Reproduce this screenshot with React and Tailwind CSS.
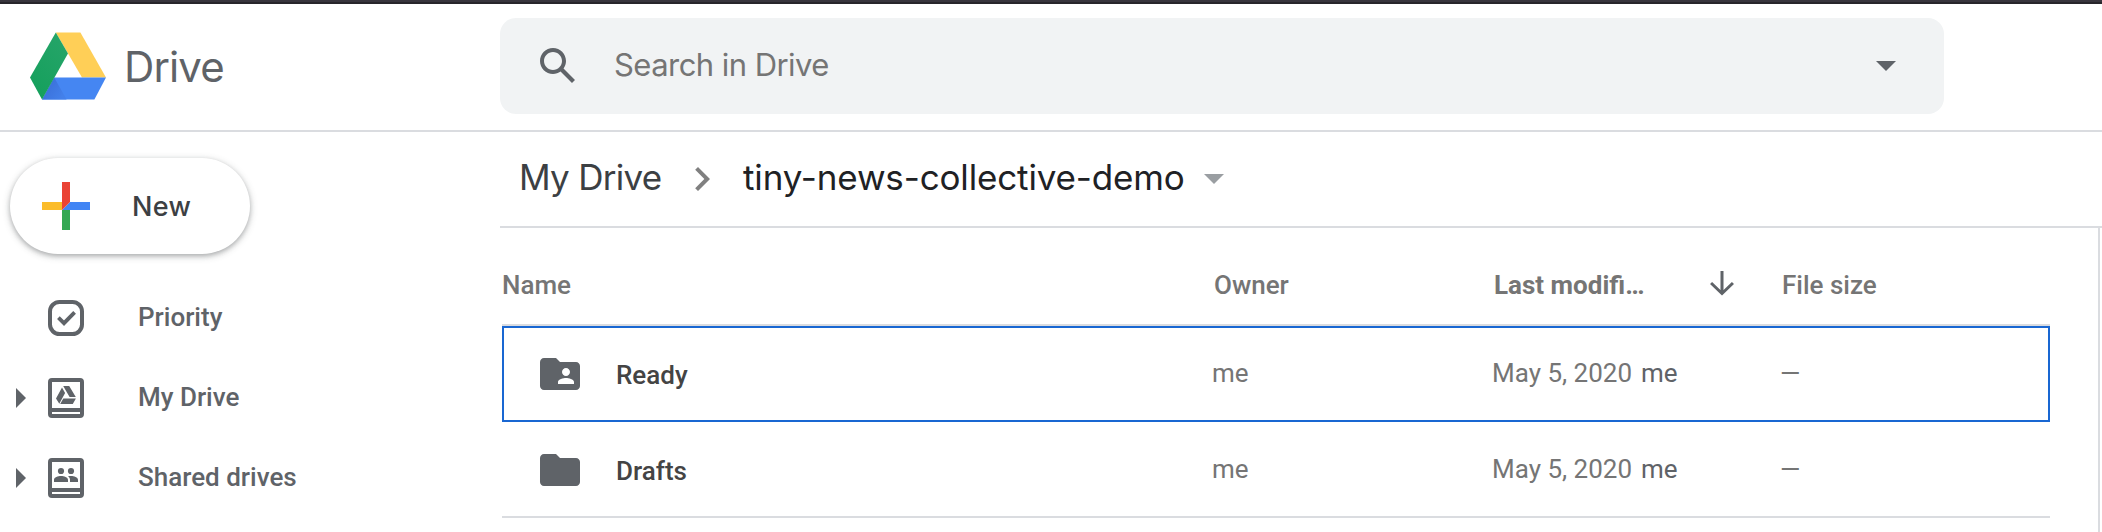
function DriveLogo() {
  return (
    <svg width="76" height="68" viewBox="30 32 76 68" className="shrink-0">
      <defs>
        <linearGradient id="fold" x1="0" y1="0" x2="1" y2="0.6">
          <stop offset="0.2" stopColor="#3a6fd8" />
          <stop offset="1" stopColor="#4380ea" />
        </linearGradient>
        <linearGradient id="leaf" x1="1" y1="0" x2="0.4" y2="1">
          <stop offset="0" stopColor="#27a56a" />
          <stop offset="1" stopColor="#16a05d" />
        </linearGradient>
      </defs>
      <polygon points="55.8,32.6 80.4,32.6 106,77.6 82,77.6" fill="#ffcf57" />
      <polygon points="54.2,77.6 106,77.6 94.4,99.4 42,99.4" fill="#4586f2" />
      <polygon points="54.2,77.6 66.6,99.4 42,99.4" fill="url(#fold)" />
      <polygon points="55.8,32.6 68,53.6 42,99.4 30,77.6" fill="url(#leaf)" />
    </svg>
  );
}

function PlusIcon() {
  return (
    <svg width="48" height="48" viewBox="0 0 48 48" className="shrink-0">
      <polygon points="0,20 20,20 20,28 0,28" fill="#fbbc2a" />
      <polygon points="20,28 28,28 28,48 20,48" fill="#34a853" />
      <polygon points="28,20 48,20 48,28 20,28" fill="#4285f4" />
      <polygon points="20,0 28,0 28,20 20,28" fill="#ea4335" />
    </svg>
  );
}

function PriorityIcon() {
  return (
    <svg width="36" height="36" viewBox="0 0 36 36" fill="none" stroke="#5f6368">
      <rect x="2" y="2" width="32" height="32" rx="9.5" strokeWidth="4" />
      <path d="M10.4 17.7 16 23.2 26.6 12.4" strokeWidth="3.8" />
    </svg>
  );
}

function DriveFrame({ children }) {
  return (
    <svg width="36" height="40" viewBox="0 0 36 40" fill="#5f6368">
      <path
        fillRule="evenodd"
        d="M4 0H32A4 4 0 0 1 36 4V36A4 4 0 0 1 32 40H4A4 4 0 0 1 0 36V4A4 4 0 0 1 4 0ZM4 4V30H32V4ZM4 34V36H32V34Z"
      />
      {children}
    </svg>
  );
}

function MyDriveIcon() {
  return (
    <DriveFrame>
      <path d="M15.2 8H21.2L27.8 19H21.6ZM14 9.6 17.1 15 11.3 25.8 8 20.6ZM15.3 20.4H27.9L24.8 26H12.2Z" />
    </DriveFrame>
  );
}

function SharedIcon() {
  return (
    <DriveFrame>
      <circle cx="13" cy="13" r="3.1" />
      <circle cx="23" cy="13" r="3.1" />
      <path d="M6 24V21.8C6 19.2 10 18 13 18S20 19.2 20 21.8V24ZM22 24V21.8C22 20.3 21.2 19 20 18.2 21 18 22 18 23 18 26 18 30 19.2 30 21.8V24Z" />
    </DriveFrame>
  );
}

function FolderIcon({ shared }) {
  return (
    <svg width="48" height="48" viewBox="0 0 24 24" fill="#5f6368" className="shrink-0">
      {shared ? (
        <path d="M20 6h-8l-2-2H4c-1.1 0-1.99.9-1.99 2L2 18c0 1.1.9 2 2 2h16c1.1 0 2-.9 2-2V8c0-1.1-.9-2-2-2zm-5 3c1.1 0 2 .9 2 2s-.9 2-2 2-2-.9-2-2 .9-2 2-2zm4 8h-8v-1c0-1.33 2.67-2 4-2s4 .67 4 2v1z" />
      ) : (
        <path d="M10 4H4c-1.1 0-1.99.9-1.99 2L2 18c0 1.1.9 2 2 2h16c1.1 0 2-.9 2-2V8c0-1.1-.9-2-2-2h-8l-2-2z" />
      )}
    </svg>
  );
}

function NavItem({ icon, label, expandable }) {
  return (
    <div className="flex h-20 items-center pl-4">
      <svg width="10" height="20" viewBox="0 0 10 20" fill="#5f6368" className="shrink-0">
        {expandable && <polygon points="0,0 10,10 0,20" />}
      </svg>
      <div className="ml-[22px] w-9">{icon}</div>
      <span className="ml-[54px] pb-0.5 text-[26px] leading-9 font-medium text-[#5f6368]">{label}</span>
    </div>
  );
}

const ROW =
  "grid h-24 grid-cols-[675px_280px_289px_1fr] items-center text-[26px] leading-9 text-[#757575]";

function FileRow({ name, shared, selected }) {
  return (
    <div
      className={
        selected
          ? ROW + " border-2 border-[#1967d2] pl-8"
          : ROW + " border-b-2 border-[#dadce0] pt-0.5 pl-[34px]"
      }
    >
      <div className="flex items-center">
        <FolderIcon shared={shared} />
        <span className="ml-8 pt-0.5 font-medium text-[#444]">{name}</span>
      </div>
      <span className="pb-0.5 pl-px">me</span>
      <span className="flex gap-[9px] pb-0.5 pl-px">
        <span>May 5, 2020</span>
        <span className="text-[#5f6368]">me</span>
      </span>
      <span className="pb-0.5">—</span>
    </div>
  );
}

export default function App() {
  return (
    <div className="flex h-[532px] w-full flex-col overflow-hidden bg-white font-['Roboto',sans-serif]">
      <header className="flex h-[132px] shrink-0 items-center border-b-2 border-[#dadce0] bg-[linear-gradient(#38353d_0_2px,#28262b_2px_4px,#fff_4px)] pt-0.5">
        <div className="flex w-[500px] shrink-0 items-center pl-[30px]">
          <DriveLogo />
          <span className="ml-[18px] pt-0.5 font-['Inter',sans-serif] text-[42px] leading-none tracking-[-0.9px] text-[#5f6368]">
            Drive
          </span>
        </div>
        <div className="flex h-24 w-[1444px] items-center rounded-2xl bg-[#f1f3f4] pr-12 pl-[34px]">
          <svg width="48" height="48" viewBox="0 0 24 24" fill="#5f6368" className="shrink-0">
            <path d="M20.49 19l-5.73-5.73C15.53 12.2 16 10.91 16 9.5 16 5.91 13.09 3 9.5 3S3 5.91 3 9.5 5.91 16 9.5 16c1.41 0 2.7-.47 3.77-1.24L19 20.49 20.49 19zM5 9.5C5 7.01 7.01 5 9.5 5S14 7.01 14 9.5 11.99 14 9.5 14 5 11.99 5 9.5z" />
          </svg>
          <span className="ml-8 grow pb-[3px] font-['Inter',sans-serif] text-[31px] leading-10 tracking-[-0.55px] text-[#757575]">
            Search in Drive
          </span>
          <svg width="20" height="10" viewBox="0 0 20 10" fill="#5f6368">
            <polygon points="0,0 20,0 10,10" />
          </svg>
        </div>
      </header>

      <div className="flex grow">
        <nav className="w-[500px] shrink-0 pt-[26px]">
          <button className="ml-2.5 flex h-24 w-60 items-center rounded-full bg-white pl-8 shadow-[0_2px_4px_rgba(60,64,67,0.302),0_2px_6px_2px_rgba(60,64,67,0.149)]">
            <PlusIcon />
            <span className="ml-[42px] pt-0.5 font-['Inter',sans-serif] text-[27px] leading-9 font-medium tracking-[0.3px] text-[#3c4043]">
              New
            </span>
          </button>
          <div className="mt-6">
            <NavItem icon={<PriorityIcon />} label="Priority" />
            <NavItem icon={<MyDriveIcon />} label="My Drive" expandable />
            <NavItem icon={<SharedIcon />} label="Shared drives" expandable />
          </div>
        </nav>

        <main className="flex grow flex-col">
          <div className="flex h-24 shrink-0 items-center border-b-2 border-[#dadce0] pl-[19px] font-['Inter',sans-serif] text-[35px] leading-[44px] whitespace-nowrap">
            <span className="w-[142px] shrink-0 pb-1 tracking-[-0.7px] text-[#3c4043]">My Drive</span>
            <svg width="48" height="48" viewBox="0 0 24 24" fill="#808080" className="ml-[17px] shrink-0">
              <path d="M10 6L8.59 7.41 13.17 12l-4.58 4.59L10 18l6-6z" />
            </svg>
            <span className="ml-[17px] w-[461px] shrink-0 pb-1 tracking-[-0.15px] text-[#202124]">
              tiny-news-collective-demo
            </span>
            <svg width="20" height="10" viewBox="0 0 20 10" fill="#9a9ea2">
              <polygon points="0,0 20,0 10,10" />
            </svg>
          </div>
          <div className="mr-0.5 grow border-r-2 border-[#dadce0] pr-12 pl-0.5">
            <div className="grid h-[98px] grid-cols-[712px_280px_288px_1fr] items-center border-b-2 border-[#dadce0] pt-4.5 text-[26px] leading-9 font-medium text-[#757575]">
              <span>Name</span>
              <span>Owner</span>
              <span className="flex items-center">
                <span className="w-[210px] font-bold">Last modifi…</span>
                <svg width="36" height="36" viewBox="0 0 24 24" fill="none" stroke="#5f6368" strokeWidth="2" className="-mt-1 shrink-0">
                  <path d="M12 4V18.5M4.700 12 12 19l7.300-7" />
                </svg>
              </span>
              <span>File size</span>
            </div>
            <FileRow name="Ready" shared selected />
            <FileRow name="Drafts" />
          </div>
        </main>
      </div>
    </div>
  );
}
